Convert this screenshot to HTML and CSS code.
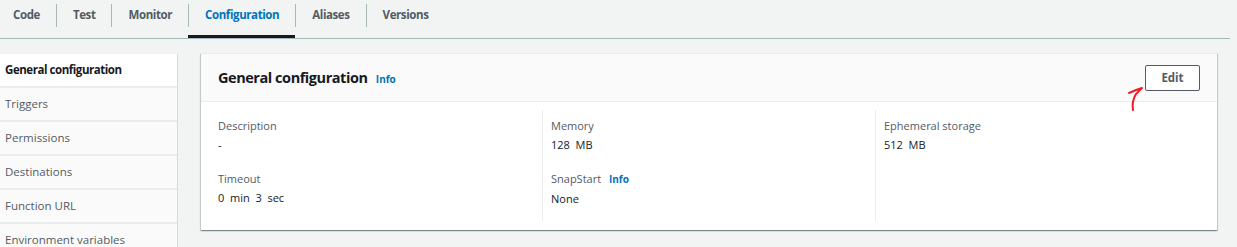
FILE: index.html
```html
<!DOCTYPE html>
<html lang="en">
<head>
  <meta charset="UTF-8">
  <title>Configuration</title>
  <link rel="stylesheet" href="styles.css">
</head>
<body>
  <div class="page">
    <!-- Abas da função -->
    <nav class="tabs">
      <a class="tab">Code</a>
      <a class="tab">Test</a>
      <a class="tab">Monitor</a>
      <a class="tab active">Configuration</a>
      <a class="tab">Aliases</a>
      <a class="tab">Versions</a>
    </nav>

    <div class="content">
      <ul class="side-nav">
        <li class="active">General configuration</li>
        <li>Triggers</li>
        <li>Permissions</li>
        <li>Destinations</li>
        <li>Function URL</li>
        <li>Environment variables</li>
      </ul>

      <section class="panel">
        <div class="panel-header">
          <h2>General configuration <a class="info">Info</a></h2>
          <button class="btn-edit">Edit</button>
          <svg class="scribble" width="24" height="28" viewBox="0 0 24 28">
            <path d="M7 26 C6 20 7 15 10 10 L16 4 M3 9 C8 7 12 5 16 4" fill="none" stroke="#ec1c24" stroke-width="2" stroke-linecap="round"/>
          </svg>
        </div>

        <div class="panel-body">
          <div class="col">
            <div class="field">
              <div class="label">Description</div>
              <div class="value">-</div>
            </div>
            <div class="field">
              <div class="label">Timeout</div>
              <div class="value">0&nbsp; min&nbsp; 3&nbsp; sec</div>
            </div>
          </div>
          <div class="col">
            <div class="field">
              <div class="label">Memory</div>
              <div class="value">128&nbsp; MB</div>
            </div>
            <div class="field">
              <div class="label">SnapStart <a class="info">Info</a></div>
              <div class="value">None</div>
            </div>
          </div>
          <div class="col">
            <div class="field">
              <div class="label">Ephemeral storage</div>
              <div class="value">512&nbsp; MB</div>
            </div>
          </div>
        </div>
      </section>
    </div>
  </div>
</body>
</html>
```

FILE: styles.css
```css
body {
  margin: 0;
  background-color: #f2f3f3;
  font-family: "Open Sans", Arial, sans-serif;
  color: #16191f;
  font-size: 11px;
}

.page {
  width: 1230px;
}

.tabs {
  display: flex;
  height: 38px;
  border-bottom: 1px solid #aab7b8;
}

.tab {
  position: relative;
  padding: 0 16px 0 17px;
  height: 35px;
  line-height: 30px;
  font-weight: 700;
  font-size: 11.5px;
  letter-spacing: -0.4px;
  color: #545b64;
  border-bottom: 3px solid transparent;
}

.tab:first-child {
  padding-left: 13px;
}

.tab + .tab::before {
  content: "";
  position: absolute;
  left: 0;
  top: 4px;
  height: 23px;
  border-left: 1px solid #aab7b8;
}

.tab.active {
  color: #0073bb;
  border-bottom-color: #16191f;
}

.content {
  display: flex;
  align-items: flex-start;
  gap: 23px;
  margin-top: 14px;
}

.side-nav {
  list-style: none;
  margin: 1px 0 0;
  padding: 0;
  width: 177px;
  border-right: 1px solid #d5dbdb;
  background-color: #eaeded;
}

.side-nav li {
  height: 32px;
  line-height: 32px;
  padding-left: 5px;
  margin-bottom: 2px;
  background-color: #fafafa;
  color: #545b64;
  font-size: 11.5px;
}

.side-nav li.active {
  background-color: #fff;
  color: #16191f;
  font-weight: 700;
  letter-spacing: -0.45px;
}

.panel {
  position: relative;
  width: 1016px;
  background-color: #fff;
  box-shadow: 0 1px 1px 0 rgba(0, 28, 36, 0.3), 1px 1px 1px 0 rgba(0, 28, 36, 0.15), -1px 1px 1px 0 rgba(0, 28, 36, 0.15);
  border-top: 1px solid #eaeded;
}

.panel-header {
  position: relative;
  display: flex;
  align-items: center;
  justify-content: space-between;
  height: 47px;
  padding: 0 17px;
  background-color: #fafafa;
  border-bottom: 1px solid #eaeded;
}

.panel-header h2 {
  margin: 0;
  font-size: 14.5px;
  font-weight: 700;
  letter-spacing: -0.45px;
}

.info {
  margin-left: 5px;
  font-size: 10px;
  font-weight: 700;
  letter-spacing: 0;
  color: #0073bb;
}

.btn-edit {
  width: 55px;
  height: 26px;
  background-color: #fff;
  border: 1px solid #545b64;
  border-radius: 2px;
  font-family: inherit;
  font-weight: 700;
  font-size: 11.5px;
  color: #545b64;
}

.scribble {
  position: absolute;
  right: 67px;
  top: 30px;
}

.panel-body {
  display: grid;
  grid-template-columns: 324px 333px 1fr;
  padding: 8px 17px 9px;
}

.col {
  min-height: 105px;
  padding-top: 6px;
}

.col + .col {
  border-left: 1px solid #eaeded;
  padding-left: 8px;
}

.field {
  margin-bottom: 15px;
}

.field:last-child {
  margin-bottom: 0;
}

.label {
  line-height: 19px;
  color: #545b64;
}

.value {
  line-height: 19px;
}
```
